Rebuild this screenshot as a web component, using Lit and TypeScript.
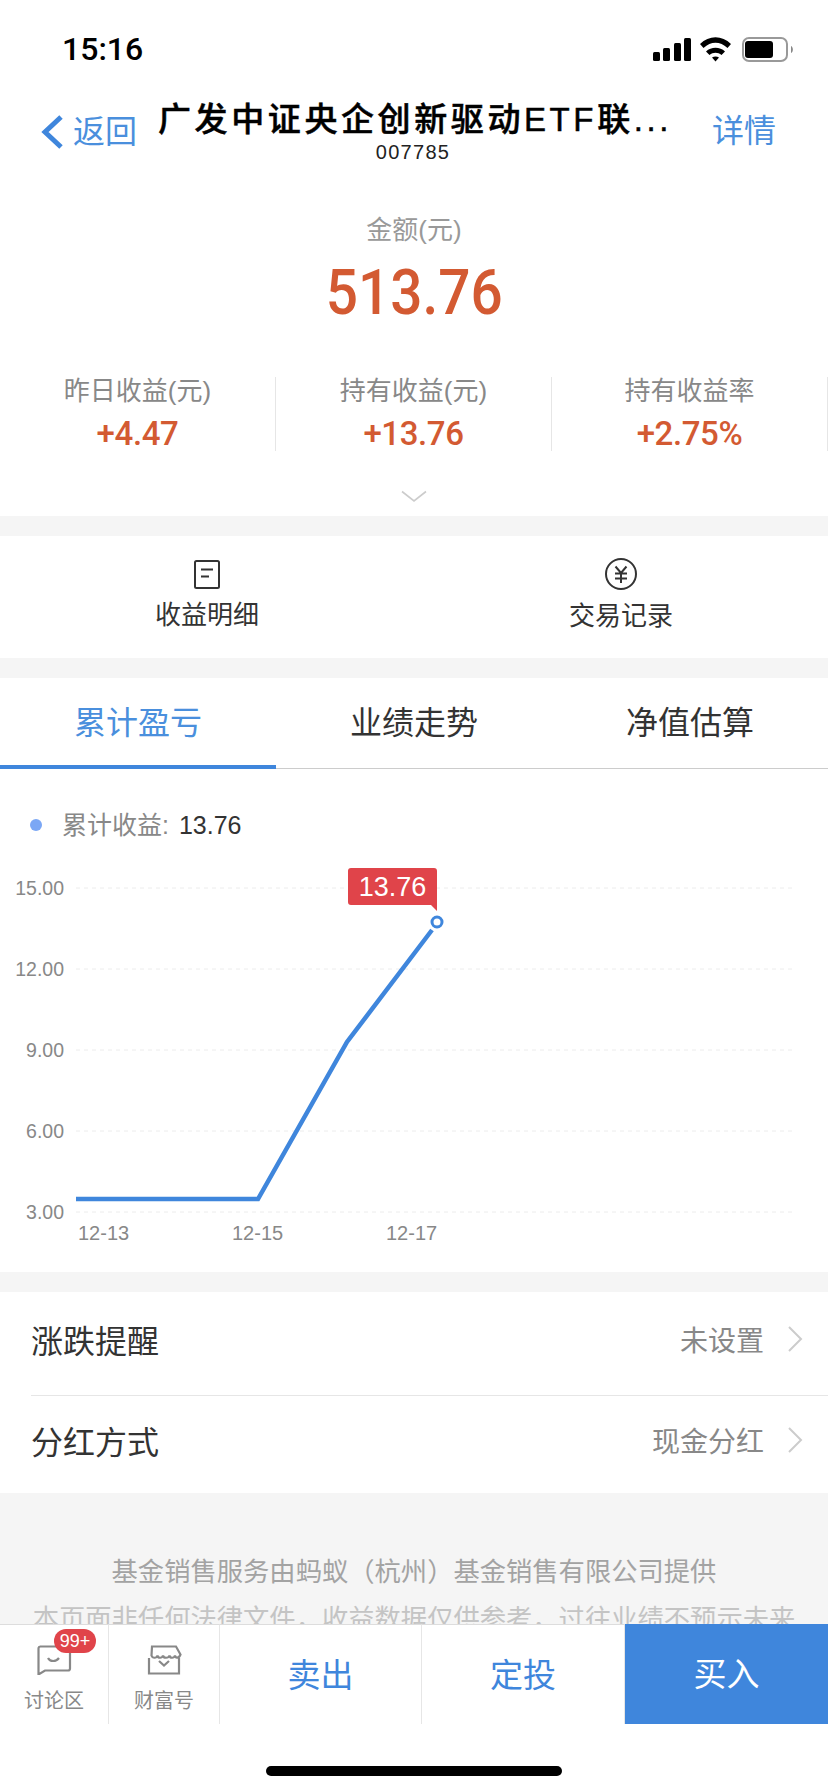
import { LitElement, html, css, svg } from "lit";
import { customElement } from "lit/decorators.js";

const SANS = css`"Liberation Sans", "Noto Sans CJK SC", sans-serif`;

@customElement("app-root")
export class AppRoot extends LitElement {
  static styles = css`
    :host { display: block; position: relative; width: 828px; height: 1792px; overflow: hidden; background: #f5f5f5; font-family: ${SANS}; color: #333; }
    svg { display: block; }
    .top { background: #fff; height: 516px; display: flex; flex-direction: column; }
    .status { height: 80px; padding: 18px 34px 0 62px; box-sizing: border-box; display: flex; justify-content: space-between; align-items: flex-start; }
    .time { font-family: Roboto, ${SANS}; font-size: 32px; line-height: 62px; font-weight: 500; color: #000; }
    .status svg { margin-top: 18px; }
    .nav { height: 100px; display: grid; grid-template-columns: 158px 510px 160px; }
    .back { display: flex; align-items: flex-start; padding: 35px 0 0 40px; gap: 9px; color: #4a8fdd; font-size: 32px; line-height: 32px; }
    .back span { margin-top: 1px; }
    .title { text-align: center; color: #000; }
    .title b { display: block; font-weight: 500; font-size: 33px; line-height: 40px; margin-top: 20px; letter-spacing: 3.6px; white-space: nowrap; -webkit-text-stroke: 0.5px #000; }
    .title small { display: block; font-size: 20px; line-height: 24px; color: #222; letter-spacing: 1.3px; }
    .detail { text-align: right; padding: 35px 52px 0 0; color: #4a8fdd; font-size: 32px; line-height: 32px; }
    .summary { text-align: center; padding-top: 30px; }
    .summary .label { font-size: 26px; line-height: 40px; color: #999; }
    .amount { margin-top: 3px; height: 82px; font-family: Roboto, ${SANS}; font-size: 63px; line-height: 80px; font-weight: 500; color: #d35a32; }
    .amount span { display: inline-block; transform: scaleX(0.9); }
    .stats { display: grid; grid-template-columns: repeat(3, 276px); margin-top: 42px; height: 72px; }
    .stat { border-right: 1px solid #e6e6e6; text-align: center; }
    .stat .k { font-size: 26px; line-height: 26px; padding-top: 1px; color: #888; }
    .stat .v { font-family: Roboto, ${SANS}; font-size: 33px; line-height: 34px; margin-top: 13px; font-weight: 500; color: #d35a32; letter-spacing: -0.4px; }
    .more { margin-top: 41px; display: flex; justify-content: center; }
    .sep { height: 20px; }
    .actions { background: #fff; height: 122px; display: grid; grid-template-columns: 414px 414px; }
    .action { display: flex; flex-direction: column; align-items: center; padding-top: 22px; box-sizing: border-box; }
    .action span { font-size: 26px; line-height: 30px; margin-top: 10px; color: #333; }
    .action.right span { margin-top: 11px; }
    .tabs { background: #fff; height: 91px; display: grid; grid-template-columns: repeat(3, 276px); border-bottom: 1px solid #ccc; box-sizing: border-box; }
    .tab { text-align: center; font-size: 32px; line-height: 90px; height: 91px; box-sizing: border-box; color: #333; }
    .tab.on { color: #4a8fdd; border-bottom: 4px solid #3f86dc; }
    .chart { background: #fff; height: 503px; }
    .legend { padding: 41px 0 15px 30px; display: flex; align-items: center; height: 30px; font-size: 25px; line-height: 30px; box-sizing: content-box; color: #888; }
    .legend i { width: 12px; height: 12px; border-radius: 50%; background: #7ba7f5; margin-right: 20px; }
    .legend b { font-weight: 400; color: #333; margin-left: 10px; }
    .rows { background: #fff; }
    .row { display: flex; align-items: center; justify-content: space-between; margin-left: 31px; padding-right: 25px; box-sizing: border-box; }
    .row.a { height: 104px; padding-bottom: 9px; border-bottom: 1px solid #e6e6e6; }
    .row.b { height: 97px; padding-bottom: 10px; }
    .row .n { font-size: 32px; color: #333; }
    .row .r { display: flex; align-items: center; gap: 23px; font-size: 28px; color: #888; }
    .note { padding-top: 59px; text-align: center; font-size: 26.3px; white-space: nowrap; }
    .note div { line-height: 40px; color: #a3a3a3; }
    .note div + div { line-height: 54px; color: #c4c4c4; }
    .foot { position: absolute; left: 0; right: 0; top: 1624px; bottom: 0; background: #fff; }
    .bar { height: 100px; display: grid; grid-template-columns: 109px 111px 202px 203px 203px; }
    .cell { position: relative; border-top: 1px solid #ddd; border-right: 1px solid #e6e6e6; box-sizing: border-box; display: flex; flex-direction: column; align-items: center; }
    .cell.ic { padding-top: 20px; font-size: 20px; color: #888; }
    .cell.ic span { line-height: 24px; margin-top: 14px; }
    .badge { position: absolute; left: 54px; top: 4px; width: 42px; height: 24px; border-radius: 12px; background: #e0444a; color: #fff; font-size: 18px; line-height: 24px; text-align: center; }
    .btn { justify-content: center; font-size: 33px; color: #3f86dc; padding-bottom: 4px; }
    .btn.buy { background: #3f86dc; color: #fff; border: 0; }
    .home { width: 296px; height: 10px; border-radius: 5px; background: #000; margin: 42px auto 0; }
  `;

  render() {
    return html`
      <div class="top">
        <div class="status">
          <div class="time">15:16</div>
          ${this.statusIcons()}
        </div>
        <div class="nav">
          <div class="back">
            <svg width="24" height="34" viewBox="0 0 24 34"><path d="M21 2 L5 17 L21 32" fill="none" stroke="#3f86dc" stroke-width="5"/></svg>
            <span>返回</span>
          </div>
          <div class="title"><b>广发中证央企创新驱动ETF联...</b><small>007785</small></div>
          <div class="detail">详情</div>
        </div>
        <div class="summary">
          <div class="label">金额(元)</div>
          <div class="amount"><span>513.76</span></div>
        </div>
        <div class="stats">
          <div class="stat"><div class="k">昨日收益(元)</div><div class="v">+4.47</div></div>
          <div class="stat"><div class="k">持有收益(元)</div><div class="v">+13.76</div></div>
          <div class="stat"><div class="k">持有收益率</div><div class="v">+2.75%</div></div>
        </div>
        <div class="more">
          <svg width="28" height="13" viewBox="0 0 28 13"><path d="M2 1.5 L14 11 L26 1.5" fill="none" stroke="#ccc" stroke-width="1.6"/></svg>
        </div>
      </div>
      <div class="sep"></div>
      <div class="actions">
        <div class="action">
          <svg width="32" height="32" viewBox="0 0 32 32"><g fill="none" stroke="#333" stroke-width="2"><rect x="4" y="3" width="24" height="27" rx="1.5"/><path d="M10 11.5h12M10 18.5h8"/></g></svg>
          <span>收益明细</span>
        </div>
        <div class="action right">
          <svg width="32" height="32" viewBox="0 0 32 32"><g fill="none" stroke="#333" stroke-width="2"><circle cx="16" cy="16" r="15"/><path d="M10.5 8.5 16 15l5.500-6.500M10 15.500h12M10 20.500h12M16 15v10"/></g></svg>
          <span>交易记录</span>
        </div>
      </div>
      <div class="sep"></div>
      <div class="tabs">
        <div class="tab on">累计盈亏</div>
        <div class="tab">业绩走势</div>
        <div class="tab">净值估算</div>
      </div>
      <div class="chart">
        <div class="legend"><i></i>累计收益:<b>13.76</b></div>
        ${this.chart()}
      </div>
      <div class="sep"></div>
      <div class="rows">
        <div class="row a"><span class="n">涨跌提醒</span><span class="r">未设置${this.chev()}</span></div>
        <div class="row b"><span class="n">分红方式</span><span class="r">现金分红${this.chev()}</span></div>
      </div>
      <div class="note">
        <div>基金销售服务由蚂蚁（杭州）基金销售有限公司提供</div>
        <div>本页面非任何法律文件，收益数据仅供参考，过往业绩不预示未来</div>
      </div>
      <div class="foot">
        <div class="bar">
          <div class="cell ic">
            <svg width="36" height="30" viewBox="0 0 36 30"><g fill="none" stroke="#888" stroke-width="2.200"><path d="M4 1.500h28a2 2 0 0 1 2 2v20a2 2 0 0 1-2 2H9l-6.500 4V3.500a2 2 0 0 1 2-2z"/><path d="M12 13c2 4 8 4 11 0"/></g></svg>
            <span>讨论区</span>
            <div class="badge">99+</div>
          </div>
          <div class="cell ic">
            <svg width="36" height="30" viewBox="0 0 36 30"><g fill="none" stroke="#888" stroke-width="2.200"><path d="M6 1.500h24l4.500 8c-1.500 4-5 4-5.500 1-1 3-5 3-5.500 0-1 3-6 3-6.500 0-1 3-5 3-5.500 0-1 3-5 3-6 0z"/><path d="M3 13v15.500h30V13"/><path d="M13 16l5 4.500 5-4.500"/></g></svg>
            <span>财富号</span>
          </div>
          <div class="cell btn">卖出</div>
          <div class="cell btn">定投</div>
          <div class="cell btn buy">买入</div>
        </div>
        <div class="home"></div>
      </div>
    `;
  }

  chev() {
    return svg`<svg width="16" height="28" viewBox="0 0 16 28"><path d="M2 2 L14 14 L2 26" fill="none" stroke="#ccc" stroke-width="2"/></svg>`;
  }

  statusIcons() {
    return html`<svg width="141" height="30" viewBox="0 0 141 30">
      <g fill="#000">
        <rect x="0" y="16" width="7" height="9" rx="1.500"/>
        <rect x="10" y="12" width="7" height="13" rx="1.500"/>
        <rect x="21" y="7" width="7" height="18" rx="1.500"/>
        <rect x="31" y="2" width="7" height="23" rx="1.500"/>
        <path d="M47 8C56-1 69-1 78 8l-3.500 4C67 5 58 5 50.500 12z"/>
        <path d="M53 15.500c5-5 14-5 19 0L68.500 19c-3.500-3-8.500-3-12 0z"/>
        <path d="M59 21.500c2-1.500 5-1.500 7 0l-3.500 4z"/>
        <rect x="92" y="5" width="28" height="17" rx="3"/>
      </g>
      <rect x="90" y="2" width="44" height="23" rx="6" fill="none" stroke="#999" stroke-width="2"/>
      <path d="M138 10c2.500 1 2.500 6 0 7z" fill="#888"/>
    </svg>`;
  }

  chart() {
    const grid = [888, 969, 1050, 1131, 1212];
    const ylab = ["15.00", "12.00", "9.00", "6.00", "3.00"];
    const x = [["12-13", 78], ["12-15", 232], ["12-17", 386]] as const;
    return html`<svg width="828" height="417" viewBox="0 855 828 417" font-family="Liberation Sans, Noto Sans CJK SC, sans-serif">
      ${grid.map((y, i) => svg`
        <line x1="76" x2="795" y1=${y} y2=${y} stroke="#ececec" stroke-width="1" stroke-dasharray="4 4"/>
        <text x="64" y=${y + 7} text-anchor="end" font-size="19.500" fill="#888">${ylab[i]}</text>`)}
      ${x.map(([t, px]) => svg`<text x=${px} y="1240" font-size="20" fill="#888">${t}</text>`)}
      <polyline points="76,1199 258,1199 347,1042 432,930" fill="none" stroke="#3f86dc" stroke-width="4.500"/>
      <circle cx="437" cy="922" r="5" fill="#fff" stroke="#3f86dc" stroke-width="3"/>
      <path d="M351 868h83a3 3 0 0 1 3 3v40l-6-6h-80a3 3 0 0 1-3-3v-31a3 3 0 0 1 3-3z" fill="#e0444a"/>
      <text x="392.500" y="896" text-anchor="middle" font-size="27" fill="#fff">13.76</text>
    </svg>`;
  }
}
